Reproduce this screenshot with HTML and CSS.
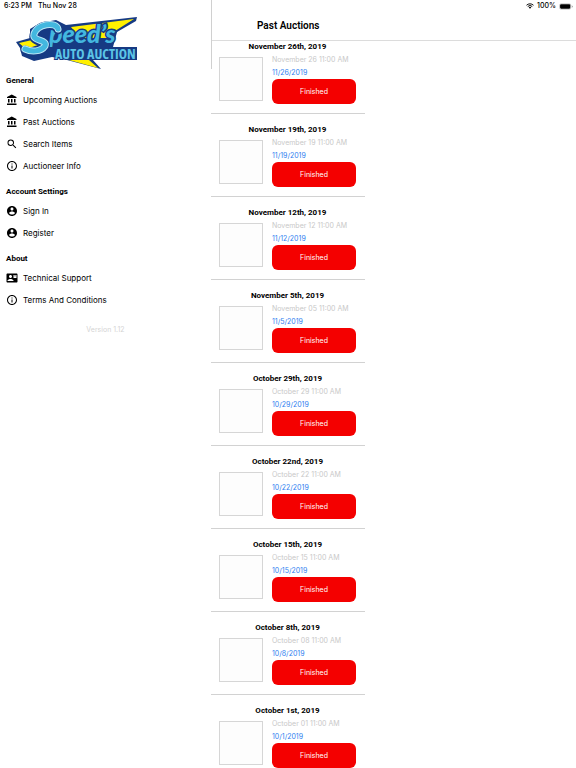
FILE: index.html
```
<!DOCTYPE html>
<html lang="en">
<head>
<meta charset="utf-8">
<meta name="viewport" content="width=device-width, initial-scale=1">
<title>Past Auctions</title>
<link rel="stylesheet" href="styles.css">
</head>
<body>
<svg class="sprite" aria-hidden="true">
  <symbol id="bank" viewBox="0 0 24 24"><path d="M4 10v7h3v-7H4zm6 0v7h3v-7h-3zM2 22h19v-3H2v3zm14-12v7h3v-7h-3zM11.500 1L2 6v2h19V6l-9.500-5z"/></symbol>
  <symbol id="search" viewBox="0 0 24 24"><path d="M15.500 14h-.79l-.28-.27A6.470 6.470 0 0 0 16 9.500 6.500 6.500 0 1 0 9.500 16c1.610 0 3.090-.59 4.230-1.570l.27.28v.79l5 4.990L20.490 19l-4.990-5zm-6 0C7.010 14 5 11.990 5 9.500S7.010 5 9.500 5 14 7.010 14 9.500 11.990 14 9.500 14z"/></symbol>
  <symbol id="info" viewBox="0 0 24 24"><path d="M11 17h2v-6h-2v6zm1-15C6.480 2 2 6.480 2 12s4.480 10 10 10 10-4.480 10-10S17.520 2 12 2zm0 18c-4.410 0-8-3.590-8-8s3.590-8 8-8 8 3.590 8 8-3.590 8-8 8zM11 9h2V7h-2v2z"/></symbol>
  <symbol id="account" viewBox="0 0 24 24"><path d="M12 2C6.480 2 2 6.480 2 12s4.480 10 10 10 10-4.480 10-10S17.520 2 12 2zm0 3c1.660 0 3 1.340 3 3s-1.340 3-3 3-3-1.340-3-3 1.340-3 3-3zm0 14.200c-2.500 0-4.710-1.280-6-3.220.03-1.990 4-3.080 6-3.080 1.990 0 5.970 1.090 6 3.080-1.290 1.940-3.500 3.220-6 3.220z"/></symbol>
  <symbol id="contact" viewBox="0 0 24 24"><path d="M21 3H3c-1.100 0-2 .9-2 2v14c0 1.100.9 2 2 2h18c1.100 0 2-.9 2-2V5c0-1.100-.9-2-2-2zM9 6c1.660 0 3 1.340 3 3s-1.340 3-3 3-3-1.340-3-3 1.340-3 3-3zm6 12H3v-1c0-2 4-3.100 6-3.100s6 1.100 6 3.100v1zm6-6h-6V6h6v6zm-1-4.500l-2 1.500-2-1.500v-.8l2 1.500 2-1.500v.8z"/></symbol>
</svg>

<div class="app">
  <aside class="sidebar">
    <div class="status"><span>6:23 PM</span><span>Thu Nov 28</span></div>
    <svg class="logo" viewBox="0 0 122 54" role="img" aria-label="Speed's Auto Auction">
      <path d="M0 25l14-4 0-9 10-6 16-3 10 5L121 0l-1 4-19 11-4 15h24v13H77l8 9-34-9-15-3-18 4-12-5-2-8z" fill="#163a83"/>
      <path d="M3 26l13-3 6 5-12 4zM55 10l63-8-19 12-5 7-30 0zM53 43h20l9 8z" fill="#fff000"/>
      <text class="logo-name" x="33" y="26">peed’s</text>
      <path d="M42 13c-2-8-21-5-24 5-2 8 14 5 11 12-4 6-14 6-20 3" fill="none" stroke="#163a83" stroke-width="9" stroke-linecap="round"/>
      <path d="M42 12c-2-8-21-5-24 5-2 8 14 5 11 12-4 6-14 6-20 3" fill="none" stroke="#b9e6f5" stroke-width="7" stroke-linecap="round"/>
      <path d="M42 12c-2-8-21-5-24 5-2 8 14 5 11 12-4 6-14 6-20 3" fill="none" stroke="#43b7df" stroke-width="5" stroke-linecap="round"/>
      <text class="logo-sub" x="39" y="42">AUTO AUCTION</text>
    </svg>
    <nav class="menu">
      <h2>General</h2>
      <a href="#upcoming"><svg><use href="#bank"/></svg>Upcoming Auctions</a>
      <a href="#past"><svg><use href="#bank"/></svg>Past Auctions</a>
      <a href="#search-items"><svg><use href="#search"/></svg>Search Items</a>
      <a href="#auctioneer"><svg><use href="#info"/></svg>Auctioneer Info</a>
      <h2>Account Settings</h2>
      <a href="#sign-in"><svg><use href="#account"/></svg>Sign In</a>
      <a href="#register"><svg><use href="#account"/></svg>Register</a>
      <h2>About</h2>
      <a href="#support"><svg><use href="#contact"/></svg>Technical Support</a>
      <a href="#terms"><svg><use href="#info"/></svg>Terms And Conditions</a>
    </nav>
    <p class="version">Version 1.12</p>
  </aside>

  <main class="content">
    <header class="topbar">
      <div class="status status-right">
        <svg class="wifi" viewBox="0 0 16 12"><path d="M1 4.500a10 10 0 0 1 14 0M3.500 7a6.500 6.500 0 0 1 9 0" fill="none" stroke="#111" stroke-width="2"/><path d="M5.500 8.800a3.600 3.600 0 0 1 5 0L8 11.500z"/></svg>
        <span>100%</span>
        <svg class="battery" viewBox="0 0 26 12"><rect x="1" y="1" width="21" height="10" rx="3" fill="none" stroke="#999"/><rect x="2" y="2" width="19" height="8" rx="2"/><path d="M24 4v4c2-1 2-3 0-4z" fill="#888"/></svg>
      </div>
      <h1>Past Auctions</h1>
    </header>
    <div class="columns">
      <ul class="auctions">
        <li><h3>November 26th, 2019</h3><div class="thumb"></div><div class="info"><time>November 26 11:00 AM</time><a href="#a1">11/26/2019</a><button type="button">Finished</button></div></li>
        <li><h3>November 19th, 2019</h3><div class="thumb"></div><div class="info"><time>November 19 11:00 AM</time><a href="#a2">11/19/2019</a><button type="button">Finished</button></div></li>
        <li><h3>November 12th, 2019</h3><div class="thumb"></div><div class="info"><time>November 12 11:00 AM</time><a href="#a3">11/12/2019</a><button type="button">Finished</button></div></li>
        <li><h3>November 5th, 2019</h3><div class="thumb"></div><div class="info"><time>November 05 11:00 AM</time><a href="#a4">11/5/2019</a><button type="button">Finished</button></div></li>
        <li><h3>October 29th, 2019</h3><div class="thumb"></div><div class="info"><time>October 29 11:00 AM</time><a href="#a5">10/29/2019</a><button type="button">Finished</button></div></li>
        <li><h3>October 22nd, 2019</h3><div class="thumb"></div><div class="info"><time>October 22 11:00 AM</time><a href="#a6">10/22/2019</a><button type="button">Finished</button></div></li>
        <li><h3>October 15th, 2019</h3><div class="thumb"></div><div class="info"><time>October 15 11:00 AM</time><a href="#a7">10/15/2019</a><button type="button">Finished</button></div></li>
        <li><h3>October 8th, 2019</h3><div class="thumb"></div><div class="info"><time>October 08 11:00 AM</time><a href="#a8">10/8/2019</a><button type="button">Finished</button></div></li>
        <li><h3>October 1st, 2019</h3><div class="thumb"></div><div class="info"><time>October 01 11:00 AM</time><a href="#a9">10/1/2019</a><button type="button">Finished</button></div></li>
      </ul>
    </div>
  </main>
</div>
</body>
</html>
```
FILE: styles.css
```
* { box-sizing: border-box; }
body, h1, h2, h3, p, ul { margin: 0; padding: 0; }
body {
  background: #fff;
  color: #000;
  font: 8px/12px Inter, "Liberation Sans", sans-serif;
}
h1, h2, h3 { font-family: Roboto, "Liberation Sans", sans-serif; }
a { color: inherit; text-decoration: none; }
.sprite { display: none; }

.app {
  display: grid;
  grid-template-columns: 211fr 365fr;
  height: 100vh;
  overflow: hidden;
}

.status {
  display: flex;
  gap: 6px;
  height: 12px;
  padding-left: 4px;
  font-size: 7px;
  font-weight: 500;
}
.status-right {
  justify-content: flex-end;
  align-items: center;
  gap: 3px;
  padding: 0 3px 0 0;
}
.wifi { width: 8px; height: 6px; }
.battery { width: 14px; height: 7px; }

.logo {
  display: block;
  width: 122px;
  height: 54px;
  margin: 5px 0 0 16px;
}
.logo-name {
  font: italic 900 25px Lato, sans-serif;
  fill: #43b7df;
  stroke: #163a83;
  stroke-width: 3px;
  paint-order: stroke;
}
.logo-sub {
  font: bold 14px "Open Sans", sans-serif;
  font-stretch: condensed;
  fill: #5cc4e6;
  stroke: #163a83;
  stroke-width: 2px;
  paint-order: stroke;
}

.menu { display: flex; flex-direction: column; padding: 0 6px; }
.menu h2 {
  height: 23px;
  padding-top: 9px;
  font-size: 8px;
  font-weight: 700;
  line-height: 12px;
}
.menu h2:first-child { height: 18px; padding-top: 4px; }
.menu a {
  display: flex;
  align-items: center;
  gap: 5px;
  height: 22px;
}
.menu svg { width: 12px; height: 12px; }
.version {
  margin-top: 13px;
  color: #d4d4d4;
  font-size: 7px;
  text-align: center;
}

.content { min-width: 0; }
.topbar {
  position: relative;
  height: 41px;
  border-bottom: 1px solid #dcdcdc;
}
.topbar::before {
  content: "";
  position: absolute;
  left: 0;
  top: 0;
  width: 1px;
  height: 69px;
  background: #d0d0d0;
}
.topbar h1 {
  padding: 6px 0 0 46px;
  font-size: 10px;
  font-weight: 600;
  line-height: 16px;
}

.columns { display: grid; grid-template-columns: 154fr 211fr; }
.auctions { min-width: 0; list-style: none; }
.auctions li {
  display: grid;
  grid-template-columns: 44px minmax(0, 1fr);
  column-gap: 9px;
  padding: 10px 9px 9px 8px;
  border-bottom: 1px solid #d2d2d2;
}
.auctions li:first-child { padding-top: 0; }
.auctions h3 {
  grid-column: 1 / -1;
  font-size: 8px;
  font-weight: 700;
  line-height: 12px;
  text-align: center;
}
.thumb { height: 44px; margin-top: 4px; border: 1px solid #d6d6d6; background: #fdfdfd; }
.info {
  display: flex;
  flex-direction: column;
  font-size: 7px;
  line-height: 13px;
  white-space: nowrap;
}
.info time { color: #c8c8c8; }
.info a { color: #2f80f0; }
.info button {
  height: 25px;
  padding: 0;
  border: 0;
  border-radius: 6px;
  background: #f40000;
  color: #fff;
  font: 7px/12px Inter, "Liberation Sans", sans-serif;
}
```
